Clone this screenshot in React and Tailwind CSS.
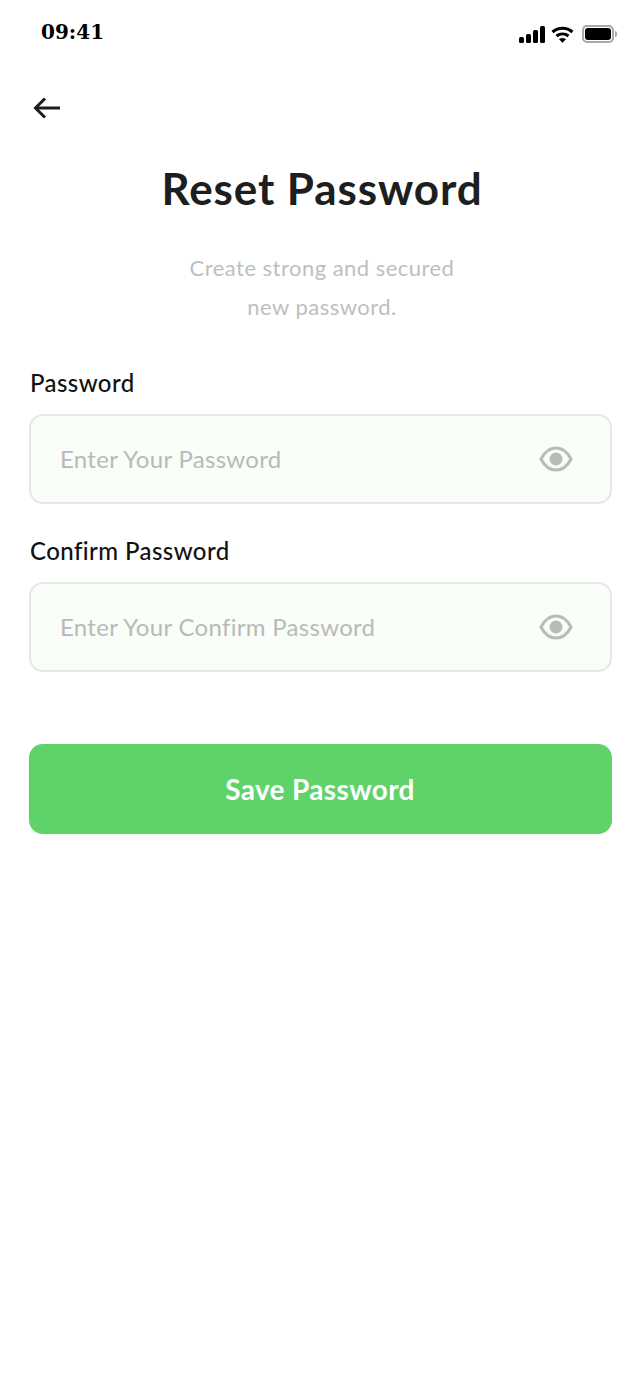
const EyeIcon = () => (
  <svg width="34" height="26" viewBox="0 0 34 26" fill="none" className="shrink-0">
    <path
      d="M2 13C5.5 6 10.8 2 17 2S28.5 6 32 13C28.5 20 23.2 24 17 24S5.5 20 2 13Z"
      stroke="#b9bbb9"
      strokeWidth="3"
      strokeLinejoin="round"
    />
    <circle cx="17" cy="13" r="6.5" fill="#b9bbb9" />
  </svg>
);

const StatusIcons = () => (
  <div className="flex items-center gap-[6px] mt-[4px]">
    <svg width="26" height="17" viewBox="0 0 26 17" fill="#000">
      <rect x="0" y="11" width="5" height="6" rx="1.5" />
      <rect x="7" y="8" width="5" height="9" rx="1.5" />
      <rect x="14" y="4" width="5" height="13" rx="1.5" />
      <rect x="21" y="0" width="5" height="17" rx="1.5" />
    </svg>
    <svg width="23" height="17" viewBox="0 0 23 17" fill="none" stroke="#000" strokeWidth="3">
      <path d="M1.5 6C7.5 1 15.5 1 21.5 6" />
      <path d="M5.5 10C9 7.3 14 7.3 17.5 10" />
      <path d="M11.5 16.5L8.3 13.2C10.2 11.8 12.8 11.8 14.7 13.2Z" fill="#000" strokeWidth="0.5" />
    </svg>
    <div className="flex items-center gap-[1px] ml-[2px]">
      <div className="w-[32px] h-[18px] rounded-[5px] border-2 border-[#a8a8a8] p-[1px]">
        <div className="w-full h-full rounded-[3px] bg-black"></div>
      </div>
      <div className="w-[2px] h-[6px] rounded-r-sm bg-[#a8a8a8]"></div>
    </div>
  </div>
);

const Field = ({ label, placeholder }) => (
  <div className="flex flex-col">
    <label className="text-[24px] leading-[30px] font-medium text-[#111] ml-[1px] mt-[1px] tracking-[0.42px]">{label}</label>
    <div className="mt-[16px] h-[90px] flex items-center justify-between pl-[29px] pr-[37px] bg-[#f9fef8] border-2 border-[#e6e8e6] rounded-[14px]">
      <span className="text-[24px] text-[#b8bab8] tracking-[0.3px]">{placeholder}</span>
      <EyeIcon />
    </div>
  </div>
);

export default function App() {
  return (
    <div className="w-[642px] h-[1389px] bg-white font-['Lato',sans-serif] overflow-hidden">
      <div className="flex items-center justify-between h-[64px] pl-[41px] pr-[25px]">
        <span className="font-['DejaVu_Serif',serif] font-bold text-[20px] text-black">09:41</span>
        <StatusIcons />
      </div>

      <div className="px-[29px]">
        <svg width="30" height="24" viewBox="0 0 30 24" fill="none" stroke="#1d1d1f" strokeWidth="3" className="mt-[32px] ml-[4px]">
          <path d="M27 12H3" />
          <path d="M12 2.5L2.5 12L12 21.5" />
        </svg>

        <h1 className="mt-[42px] ml-[2px] text-center text-[44px] leading-[52px] font-bold text-[#1d1e20] tracking-[0.9px]">
          Reset Password
        </h1>

        <p className="mt-[34px] ml-[2px] text-center text-[22px] leading-[39px] text-[#bdbfbd] tracking-[0.47px]">
          Create strong and secured
          <br />
          new password.
        </p>

        <div className="mt-[41px] flex flex-col gap-[31px] w-[583px]">
          <Field label="Password" placeholder="Enter Your Password" />
          <Field label="Confirm Password" placeholder="Enter Your Confirm Password" />
        </div>

        <button className="mt-[72px] w-[583px] h-[90px] pr-[1px] rounded-[14px] bg-[#60d26a] text-white text-[28px] font-bold tracking-[0.35px]">
          Save Password
        </button>
      </div>
    </div>
  );
}
